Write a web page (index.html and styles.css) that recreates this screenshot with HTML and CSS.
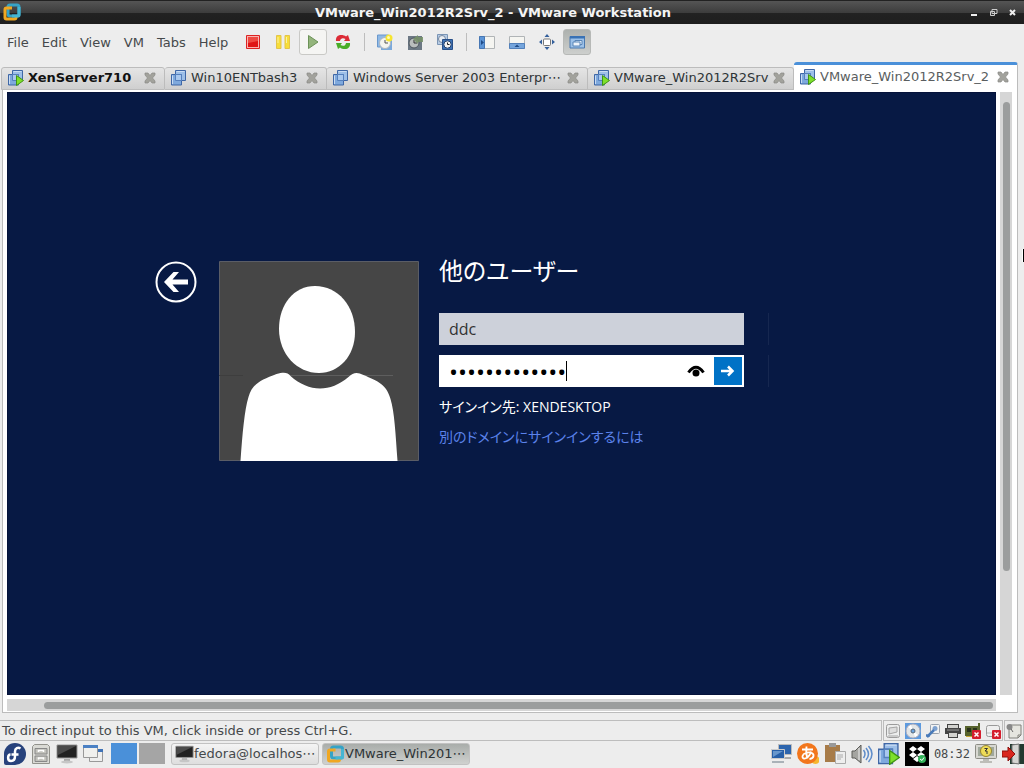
FILE: index.html
```
<!DOCTYPE html>
<html lang="en">
<head>
  <meta charset="UTF-8" />
  <title>VMware_Win2012R2Srv_2 - VMware Workstation</title>
  <meta name="viewport" content="width=device-width, initial-scale=1.0" />
  <link rel="stylesheet" href="styles.css">
</head>
<body>

  <!-- shared icons -->
  <svg class="defs" aria-hidden="true">
    <symbol id="vm" viewBox="0 0 16 16">
      <path d="M4.500.500h10v10h-10z" fill="#9dbfe8" stroke="#3f67a6"/>
      <path d="M.5 4.500h10v10.500H.5z" fill="#7fa9dd" stroke="#3f67a6"/>
      <path d="M4.500 4.500h6v6h-6z" fill="#a9c8ee" stroke="#5580bd"/>
      <path d="M5.500 1.500h8M1.500 5.500v8.500" stroke="#c9dcf3" fill="none"/>
    </symbol>
    <symbol id="vm-on" viewBox="0 0 16 16">
      <use href="#vm"/>
      <path d="M8.500 5.500v10l7-5z" fill="#7ee02b" stroke="#3f9414"/>
    </symbol>
    <symbol id="close" viewBox="0 0 12 12">
      <path d="M1 1h3l2 2.500L8 1h3v2L8.500 6 11 9v2H8L6 8.500 4 11H1V9l2.500-3L1 3z" fill="#a2a29c" stroke="#8b8b86" stroke-width=".7"/>
    </symbol>
    <symbol id="vmware" viewBox="0 0 18 18">
      <rect x="5" y="2" width="11" height="11" rx="2" fill="none" stroke="#35a3c6" stroke-width="3"/>
      <path d="M6 5H3.500Q2 5 2 6.500v8Q2 16 3.500 16h8q1.500 0 1.500-1.500V12M5 5h4" fill="none" stroke="#f0a721" stroke-width="3"/>
      <path d="M16 4v8q0 1-1 1H9" fill="none" stroke="#45b6d3" stroke-width="3"/>
    </symbol>
    <symbol id="screen" viewBox="0 0 22 20">
      <path d="M1 1h20v13H1z" fill="#222" stroke="#999"/>
      <path d="M2 2h18L2 11z" fill="#4b4b4b"/>
      <path d="M8 15h6v2H8z" fill="#aaa"/>
      <ellipse cx="11" cy="18" rx="6" ry="1.500" fill="#c6c6c6"/>
    </symbol>
  </svg>

  <header class="titlebar">
    <svg class="app-icon" viewBox="0 0 18 18"><use href="#vmware"/></svg>
    <h1>VMware_Win2012R2Srv_2 - VMware Workstation</h1>
    <div class="win-buttons">
      <button aria-label="Minimize"><svg viewBox="0 0 9 9"><path d="M1 6h6v2H1z" fill="#eee"/></svg></button>
      <button aria-label="Restore"><svg viewBox="0 0 9 9"><path d="M3 1.500h5v4H3zM1.500 3.500h4v4h-4z" fill="#333" stroke="#ccc"/></svg></button>
      <button aria-label="Close"><svg viewBox="0 0 9 9"><path d="M2 2l5 5M7 2L2 7" stroke="#eee" stroke-width="2"/></svg></button>
    </div>
  </header>

  <div class="toolbar">
    <nav class="menu">
      <a href="#">File</a>
      <a href="#">Edit</a>
      <a href="#">View</a>
      <a href="#">VM</a>
      <a href="#">Tabs</a>
      <a href="#">Help</a>
    </nav>
    <div class="tools">
      <button aria-label="Power off"><svg viewBox="0 0 16 16"><path d="M1.500 1.500h13v13h-13z" fill="#f8b4b0" stroke="#d22"/><path d="M3 3h10v10H3z" fill="#e01616"/><path d="M3 3h10v4L3 9z" fill="#ee4a42"/></svg></button>
      <button aria-label="Suspend"><svg viewBox="0 0 16 16"><path d="M1.500 1.500h4.500v13H1.500zM10 1.500h4.500v13H10z" fill="#f7de39" stroke="#e3c44a"/><path d="M3 3v6M11.500 3v6" stroke="#fbf0a4"/></svg></button>
      <button class="framed" aria-label="Power on"><svg viewBox="0 0 16 16"><path d="M3.500 1.500v13L13 8z" fill="#94b57c" stroke="#6c9258"/></svg></button>
      <button aria-label="Restart"><svg viewBox="0 0 16 16"><path d="M1 7C.5 3 3 1 6 1c2 0 4 .5 5 1.500L13 1l2 6H9l1.500-2C8 3.500 5.500 4 5 7z" fill="#dc2b36"/><path d="M15 9c.5 4-2 6-5 6-2 0-4-.5-5-1.500L3 15 1 9h6l-1.500 2c2.500 1.500 5 1 5.500-2z" fill="#49ad28"/></svg></button>
      <span class="sep"></span>
      <button aria-label="Take snapshot"><svg viewBox="0 0 16 16"><path d="M.5 1h11v12H.5z" fill="#8fb9e6" stroke="#6a98cc"/><path d="M4 4h11v12H4z" fill="#7ba9dc"/><circle cx="8" cy="9" r="5.500" fill="#f4f4f0" stroke="#aeb6bf"/><path d="M8 6v3h3" fill="none" stroke="#555"/><circle cx="12" cy="4" r="3.500" fill="#f6e52f"/><circle cx="11.500" cy="3.500" r="1.500" fill="#fffbb0"/></svg></button>
      <button aria-label="Revert to snapshot"><svg viewBox="0 0 16 16"><path d="M1 2h14v14H1z" fill="#6c7884"/><circle cx="7" cy="9" r="5" fill="#b9bdbd" stroke="#4d565e"/><path d="M7 6v3h3" fill="none" stroke="#333"/><path d="M6 5l5-4v2h5v5h-5v2z" fill="#779069" opacity=".9"/></svg></button>
      <button aria-label="Snapshot manager"><svg viewBox="0 0 16 16"><path d="M.5.500h10v10H.5z" fill="#b8cde6" stroke="#7b95b5"/><circle cx="5" cy="5" r="3.500" fill="#e9edf2" stroke="#7688a0"/><path d="M5.500 5.500h10v10h-10z" fill="#3d72b5" stroke="#284f88"/><circle cx="10.500" cy="10.500" r="3.700" fill="#f3f3f3" stroke="#223f6c"/><path d="M10.500 8.500v2h2" fill="none" stroke="#222"/></svg></button>
      <span class="sep"></span>
      <button aria-label="Show library"><svg viewBox="0 0 16 16"><path d="M.5 2.500h15v12H.5z" fill="#f5f5f1" stroke="#b0b4b6"/><path d="M.5 2.500h5v12h-5z" fill="#5e96d7" stroke="#4777b4"/><path d="M2 6l3 2.500L2 11z" fill="#214d88"/></svg></button>
      <button aria-label="Show thumbnails"><svg viewBox="0 0 16 16"><path d="M.5 2.500h15v12H.5z" fill="#f5f5f1" stroke="#b0b4b6"/><path d="M.5 9.500h15v5H.5z" fill="#75a5dc" stroke="#5280ba"/><path d="M5.500 13L8 10.500 10.500 13z" fill="#214d88"/></svg></button>
      <button aria-label="Full screen"><svg viewBox="0 0 16 16"><rect x="4.500" y="5" width="7" height="6.500" rx="1" fill="#fff" stroke="#777"/><path d="M8 0l2.500 3h-5zM8 16l2.500-3h-5zM0 8l3-2.500v5zM16 8l-3-2.500v5z" fill="#34609c"/></svg></button>
      <button class="pressed" aria-label="Console view"><svg viewBox="0 0 16 16"><path d="M1 2.500h14.500v11.500H1z" fill="#9cc1e8" stroke="#4a78ae"/><path d="M1 2h15v2.500H1z" fill="#3972b5"/><path d="M6 6.500h7v4H6z" fill="#dce9f6" stroke="#5985b7"/><path d="M4 8h7v4H4z" fill="#eef4fb" stroke="#5985b7"/></svg></button>
    </div>
  </div>

  <div class="tabs">
    <div class="tab bold"><svg class="vm-icon"><use href="#vm-on"/></svg><a href="#">XenServer710</a><button aria-label="Close tab"><svg><use href="#close"/></svg></button></div>
    <div class="tab"><svg class="vm-icon"><use href="#vm"/></svg><a href="#">Win10ENTbash3</a><button aria-label="Close tab"><svg><use href="#close"/></svg></button></div>
    <div class="tab"><svg class="vm-icon"><use href="#vm"/></svg><a href="#">Windows Server 2003 Enterpr⋯</a><button aria-label="Close tab"><svg><use href="#close"/></svg></button></div>
    <div class="tab"><svg class="vm-icon"><use href="#vm-on"/></svg><a href="#">VMware_Win2012R2Srv</a><button aria-label="Close tab"><svg><use href="#close"/></svg></button></div>
    <div class="tab active"><svg class="vm-icon"><use href="#vm-on"/></svg><a href="#">VMware_Win2012R2Srv_2</a><button aria-label="Close tab"><svg><use href="#close"/></svg></button></div>
  </div>

  <main class="page">
    <section class="guest" lang="ja">
      <button class="back" aria-label="戻る">
        <svg viewBox="0 0 42 42"><circle cx="21" cy="21" r="19.500" fill="none" stroke="#fff" stroke-width="2"/><path d="M9 21l9.500-10H24l-6.500 7.500H33v5H17.500L24 31h-5.500z" fill="#fff"/></svg>
      </button>
      <svg class="avatar" viewBox="0 0 200 200">
        <path d="M.5.500h199v199H.5z" fill="#464646" stroke="#5a5d66"/>
        <path d="M0 114.500h24" stroke="#3e3e3e"/>
        <path d="M60 114.500h114" stroke="#5e5e5e"/>
        <path d="M96 25c23 0 40 20 40 46 0 24-16 41-36 41-22 0-40-19-40-44 0-25 15-43 36-43z" fill="#fff"/>
        <path d="M21.500 200c2-28 4-51 8-64 4-14 13-17 28-23 7-2 11-2 14 2 18 16 39 17 58 1 5-5 9-5 15-2 14 6 23 9 27 24 4 13 5 34 7 62z" fill="#fff"/>
      </svg>
      <form class="login">
        <h2>他のユーザー</h2>
        <div class="field user">
          <input type="text" value="ddc" aria-label="ユーザー名" />
        </div>
        <div class="field password">
          <input type="password" value="xxxxxxxxxxxxx" aria-label="パスワード" />
          <span class="caret"></span>
          <button type="button" class="reveal" aria-label="パスワードを表示"><svg viewBox="0 0 18 12"><path d="M1.500 7.500Q9-3 16.500 7.500" fill="none" stroke="#000" stroke-width="3"/><circle cx="9" cy="8" r="3.500"/></svg></button>
          <button type="submit" class="go" aria-label="サインイン"><svg viewBox="0 0 14 12"><path d="M0 6h11M7 1.500L11.500 6 7 10.500" fill="none" stroke="#fff" stroke-width="2.500"/></svg></button>
        </div>
        <p>サインイン先: XENDESKTOP</p>
        <a href="#">別のドメインにサインインするには</a>
      </form>
    </section>
    <div class="vscroll"><div class="thumb"></div></div>
    <div class="hscroll"><div class="thumb"></div></div>
    <span class="pointer"></span>
  </main>

  <div class="statusbar">
    <p>To direct input to this VM, click inside or press Ctrl+G.</p>
    <div class="devices">
      <svg viewBox="0 0 16 16"><rect x="1.500" y="1.500" width="13" height="13" rx="2" fill="#eceded" stroke="#9b9b9b"/><path d="M4 5l8-1v5l-8 2zM3 13h10" fill="#ddd" stroke="#a5a5a5"/></svg>
      <svg viewBox="0 0 16 16"><path d="M0 0h16v16H0z" fill="#5d9ade"/><circle cx="8" cy="8" r="7" fill="#e2e6e8" stroke="#aab"/><path d="M8 8L3 4l3-2zM8 8l5 4-3 2z" fill="#fff"/><circle cx="8" cy="8" r="2" fill="#6ba4e0" stroke="#567"/></svg>
      <svg viewBox="0 0 16 16"><rect x="5.500" y="1.500" width="9" height="9" rx="1" fill="#f2f2f2" stroke="#9aa3ae"/><circle cx="10" cy="5.500" r="2.500" fill="#7ea2d0"/><path d="M9 7l-7 7M1 12.500h4" stroke="#497ab9" stroke-width="2.500"/></svg>
      <svg viewBox="0 0 16 16"><path d="M2 1h12v4h2v6h-3v4H3v-4H0V5h2z" fill="#444"/><path d="M3 2h10v3H3zM4 10h8v4H4z" fill="#d3d3d0"/><path d="M2 7h12" stroke="#999"/></svg>
      <svg viewBox="0 0 16 16"><path d="M0 3h13V0h2v13H0z" fill="#57632c"/><path d="M2 5h4v4H2zM8 5h4v3H8z" fill="#28301a"/><path d="M1 13.500h8" stroke="#c9a932"/><rect x="7" y="7" width="9" height="9" rx="1" fill="#d41f2e"/><path d="M9.500 9.500l4 4M13.500 9.500l-4 4" stroke="#fff" stroke-width="1.500"/></svg>
      <svg viewBox="0 0 16 16"><rect x="1.500" y="2.500" width="13" height="11" rx="2" fill="#efefef" stroke="#999"/><path d="M2 10h9" stroke="#bbb"/><rect x="7" y="7" width="9" height="9" rx="1" fill="#d41f2e"/><path d="M9.500 9.500l4 4M13.500 9.500l-4 4" stroke="#fff" stroke-width="1.500"/></svg>
    </div>
    <div class="devices">
      <svg viewBox="0 0 16 16"><path d="M4 2h11v10l-3 3H3V6z" fill="#e5e5df" stroke="#80807a"/><path d="M15 12h-3v3" fill="none" stroke="#80807a"/><circle cx="3.500" cy="4" r="3" fill="#888"/><path d="M5 6l2 3" stroke="#666"/></svg>
    </div>
  </div>

  <footer class="taskbar">
    <div class="launchers">
      <button aria-label="Fedora menu"><svg viewBox="0 0 22 22"><path d="M11 0a11 11 0 1 1 0 22H2q-2 0-2-2v-9A11 11 0 0 1 11 0z" fill="#27427c"/><path d="M6.500 11.500C3.500 11.500 3 18 7 18s4-3 4-5V8.500C11 5 14 4 16.500 5.500M7.500 11.500h7" fill="none" stroke="#fff" stroke-width="2.500"/></svg></button>
      <button aria-label="Files"><svg viewBox="0 0 22 22"><path d="M2.500 3.500l2-2h13l2 2v17h-17z" fill="#dadad5" stroke="#92928c"/><path d="M5 5.500h12V11H5zM5 13h12v5.500H5z" fill="#c1c1bb" stroke="#888"/><path d="M8.500 9V7.500h5V9M8.500 16.500V15h5v1.500" fill="none" stroke="#fff" stroke-width="1.500"/></svg></button>
      <button aria-label="Terminal"><svg viewBox="0 0 22 20"><use href="#screen"/></svg></button>
      <button aria-label="Show desktop"><svg viewBox="0 0 22 22"><path d="M7.500 7.500h13v11h-13z" fill="#eee" stroke="#999"/><path d="M7 6h14v3H7z" fill="#3e72b7"/><path d="M1.500 3.500h14v11h-14z" fill="#f0f0ee" stroke="#999"/><path d="M1 2h15v3H1z" fill="#4a80c4"/></svg></button>
    </div>
    <div class="pager">
      <button class="current" aria-label="Workspace 1"></button>
      <button aria-label="Workspace 2"></button>
    </div>
    <div class="tasks">
      <button><svg viewBox="0 0 22 20"><use href="#screen"/></svg>fedora@localhos⋯</button>
      <button class="on"><svg viewBox="0 0 18 18"><use href="#vmware"/></svg>VMware_Win201⋯</button>
    </div>
    <div class="tray">
      <svg viewBox="0 0 22 22"><path d="M8.500 1.500h13v10h-13z" fill="#2d65ad" stroke="#bbb"/><path d="M11 14h10v2H11z" fill="#aaa"/><path d="M1.500 6.500h13v9h-13z" fill="#2860a8" stroke="#ccc"/><path d="M3 8h10l-10 6z" fill="#6897cc"/><path d="M2 18h12v2H2z" fill="#aab2b8"/></svg>
      <svg viewBox="0 0 22 22"><circle cx="18.500" cy="17" r="4" fill="#f6b72f"/><circle cx="10.500" cy="10.500" r="10.500" fill="#f2761c"/><path d="M5 6.500h11M9.500 3.500c-.5 4-.5 8 1 12M14 8.500c-1 4-4 7.500-7 7-2.500-.5-2-4.500 2-5.500 4-1.500 8 0 7.500 3-.3 1.800-1.800 2.800-4 3" fill="none" stroke="#fff" stroke-width="1.800"/></svg>
      <svg viewBox="0 0 22 22"><path d="M1 2h15v17H1z" fill="#a77b48"/><path d="M5 0h7v4H5z" fill="#999"/><path d="M11.500 8.500h10v12h-10z" fill="#eee" stroke="#aaa"/><path d="M13 12h6M13 14h6M13 16h4" stroke="#aaa"/></svg>
      <svg viewBox="0 0 22 22"><path d="M1 8h3l6-6v18l-6-5H1z" fill="#a5a5a1" stroke="#5c5c59"/><path d="M8 5v12" stroke="#eee"/><path d="M12.500 7q3 4 0 8M15 5q5 6 0 12M17.500 3q7 8 0 16" fill="none" stroke="#5f8dca" stroke-width="1.500"/></svg>
      <svg viewBox="0 0 16 16"><use href="#vm-on"/></svg>
      <svg class="dropbox" viewBox="0 0 24 24"><path d="M0 0h24v24H0z"/><path d="M8 4l4 3-4 3-4-3zM16 4l4 3-4 3-4-3zM8 10l4 3-4 3-4-3zM16 10l4 3-4 3-4-3zM12 14l4 3-4 3-4-3z" fill="#fff"/><circle cx="17" cy="17" r="4" fill="#32b259"/><path d="M15 17l2 1.500 2-3" fill="none" stroke="#fff"/></svg>
      <time>08:32</time>
      <svg viewBox="0 0 22 22"><rect x=".5" y="1.500" width="21" height="14" rx="1" fill="#d7d7d1" stroke="#8c8c85"/><path d="M3 4h16v9H3z" fill="#a0a89b"/><circle cx="11" cy="8" r="5.500" fill="#eedc58" stroke="#96852e"/><path d="M9.500 5.500h3L10 8h2v3" fill="none" stroke="#333"/><path d="M8 16h6v2h3v2H5v-2h3z" fill="#bdbdb8"/></svg>
      <svg viewBox="0 0 22 22"><path d="M8 1h14v20H8z" fill="#223a30"/><path d="M10 2l7-1v20l-7-1z" fill="#d5d5d2" stroke="#777"/><path d="M0 8h6V4l7 7-7 7v-4H0z" fill="#d9261d" stroke="#8d100c"/></svg>
    </div>
  </footer>

</body>
</html>
```

FILE: styles.css
```
* {
  box-sizing: border-box;
}

body {
  display: flex;
  flex-direction: column;
  height: 100vh;
  margin: 0;
  overflow: hidden;
  background: #ededed;
  color: #45494b;
  font-family: "DejaVu Sans", "Noto Sans CJK JP", sans-serif;
  font-size: 13px;
}

h1, h2, p {
  margin: 0;
  font-weight: normal;
}

a {
  color: inherit;
  text-decoration: none;
}

button {
  display: flex;
  align-items: center;
  justify-content: center;
  padding: 0;
  border: none;
  background: none;
  color: inherit;
  font: inherit;
  cursor: pointer;
}

svg {
  display: block;
  flex: none;
}

.defs {
  position: absolute;
  width: 0;
  height: 0;
}

/* title bar */
.titlebar {
  display: grid;
  grid-template-columns: 22px 1fr 60px;
  align-items: center;
  height: 24px;
  padding-bottom: 1px;
  background: linear-gradient(#555 0, #3c3c3c 12px, #222 12px, #1e1e1e);
  border-top: 1px solid #222;
}

.titlebar h1 {
  color: #f4f4f4;
  text-align: center;
  font-size: 13px;
  font-weight: bold;
}

.app-icon {
  width: 18px;
  height: 18px;
  margin-left: 3px;
}

.win-buttons {
  display: flex;
  justify-content: flex-end;
  gap: 10px;
  padding-right: 7px;
}

.win-buttons svg {
  width: 9px;
  height: 9px;
}

/* menu and toolbar */
.toolbar {
  display: flex;
  align-items: center;
  height: 36px;
  padding-left: 7px;
}

.menu {
  display: flex;
  gap: 13px;
  width: 232px;
}

.tools {
  display: flex;
  gap: 2px;
}

.tools button {
  width: 28px;
  height: 26px;
  border-radius: 3px;
}

.tools svg {
  width: 16px;
  height: 16px;
}

.tools .framed {
  background: #f5f5f3;
  border: 1px solid #c9c9c6;
}

.tools .pressed {
  background: linear-gradient(#adb1ae, #cdcfcd);
  border: 1px solid #b7b9b7;
}

.sep {
  width: 10px;
  height: 18px;
  margin-top: 4px;
  background: linear-gradient(#bdbdbd, #bdbdbd) center / 1px 100% no-repeat;
}

/* tabs */
.tabs {
  display: grid;
  grid-template-columns: 164fr 162fr 261fr 206fr 224fr;
  align-items: end;
  height: 30px;
  margin-right: 6px;
  padding-left: 1px;
}

.tab {
  display: flex;
  align-items: center;
  gap: 4px;
  height: 23px;
  padding: 0 8px 2px 6px;
  background: linear-gradient(#e5e5e5, #cfcfcf);
  border: 1px solid #bcbcbc;
  border-left-width: 0;
  border-radius: 3px 3px 0 0;
  color: #2e3436;
  white-space: nowrap;
}

.tab:first-child {
  border-left-width: 1px;
}

.tab.bold {
  color: #111;
  font-weight: bold;
}

.tab.active {
  height: 28px;
  background: #fff;
  border-top: 3px solid #4a90d9;
  border-bottom: none;
  color: #5a5e60;
}

.vm-icon {
  width: 16px;
  height: 16px;
}

.tab button {
  margin-left: auto;
}

.tab button svg {
  width: 12px;
  height: 12px;
}

/* guest display with its scroll bars */
.page {
  display: grid;
  flex: 1;
  grid-template-columns: 1fr 12px;
  grid-template-rows: 1fr 12px;
  gap: 4px;
  margin: 0 6px 7px 2px;
  padding: 2px 5px 1px 4px;
  background: #fff;
  border: 1px solid #bcbcbc;
  border-top: none;
}

.guest {
  display: flex;
  align-items: flex-start;
  padding: 168px 0 0 147px;
  background: #071944;
  border: 1px solid #05123a;
  color: #fff;
  font-family: "Open Sans", "Noto Sans CJK JP", sans-serif;
  font-feature-settings: "palt";
}

.vscroll,
.hscroll {
  background: #d6d6d6;
}

.vscroll {
  padding: 10px 2px 124px 3px;
}

.hscroll {
  padding: 3px 3px 2px 37px;
}

.thumb {
  height: 100%;
  background: #9b9d9d;
  border-radius: 4px;
}

.pointer {
  position: absolute;
  top: 249px;
  right: 0;
  width: 2px;
  height: 13px;
  background: #000;
  border-left: 1px solid #fff;
}

.back svg {
  width: 42px;
  height: 42px;
}

.avatar {
  width: 200px;
  height: 200px;
  margin: 0 20px 0 22px;
}

.login h2 {
  height: 52px;
  font-size: 24px;
  line-height: 20px;
}

.field {
  position: relative;
  display: flex;
  width: 305px;
  height: 32px;
  margin-bottom: 10px;
}

.field::after {
  position: absolute;
  top: 0;
  right: -25px;
  bottom: 0;
  width: 1px;
  background: #162750;
  content: "";
}

.field input {
  flex: 1;
  min-width: 0;
  padding: 0 10px;
  border: none;
  outline: none;
  background: none;
  color: #333;
  font-family: "Open Sans", sans-serif;
  font-size: 16px;
}

.field.user {
  background: #cdd1da;
}

.field.password {
  padding: 2px;
  background: #fff;
}

.field.password input {
  padding: 0 8px;
  color: #000;
  font-size: 24px;
}

.caret {
  position: absolute;
  top: 6px;
  left: 127px;
  width: 1px;
  height: 20px;
  background: #000;
}

.reveal {
  width: 36px;
}

.reveal svg {
  width: 18px;
  height: 12px;
}

.go {
  width: 28px;
  background: #0072c6;
}

.go svg {
  width: 14px;
  height: 12px;
}

.login p,
.login a {
  display: block;
  margin-bottom: 10px;
  font-size: 14px;
  line-height: 20px;
}

.login a {
  color: #5b82ea;
}

/* status bar */
.statusbar {
  display: flex;
  height: 21px;
}

.statusbar p,
.devices {
  display: flex;
  align-items: center;
  border: 1px solid #bdbdbd;
}

.statusbar p {
  flex: 1;
  padding-left: 2px;
  border-left: none;
}

.devices {
  gap: 4px;
  margin-left: 1px;
  padding: 0 1px;
}

.devices svg {
  width: 16px;
  height: 16px;
}

/* desktop panel */
.taskbar {
  display: flex;
  align-items: center;
  height: 27px;
  padding: 0 0 2px 3px;
}

.launchers {
  display: flex;
  gap: 3px;
}

.launchers button {
  width: 23px;
  height: 22px;
}

.launchers svg {
  width: 22px;
  height: 22px;
}

.pager {
  display: flex;
  gap: 2px;
  margin: 0 6px 0 7px;
}

.pager button {
  width: 26px;
  height: 21px;
  background: #a5a5a5;
}

.pager .current {
  background: #4a90d9;
}

.tasks {
  display: flex;
  gap: 3px;
}

.tasks button {
  justify-content: flex-start;
  width: 148px;
  height: 22px;
  padding-left: 3px;
  border: 1px solid #c2c2c2;
  border-radius: 3px;
  background: linear-gradient(#f4f4f4, #dedede);
}

.tasks svg {
  width: 19px;
  height: 18px;
}

.tasks .on {
  background: linear-gradient(#a9adaa, #cfd1cf);
  color: #2e3436;
}

.tray {
  display: flex;
  align-items: center;
  gap: 5px;
  margin-left: auto;
}

.tray svg {
  width: 22px;
  height: 22px;
}

.tray .dropbox {
  width: 24px;
  height: 24px;
}

.tray time {
  font-family: "DejaVu Sans Mono", monospace;
  font-size: 12px;
}
```
